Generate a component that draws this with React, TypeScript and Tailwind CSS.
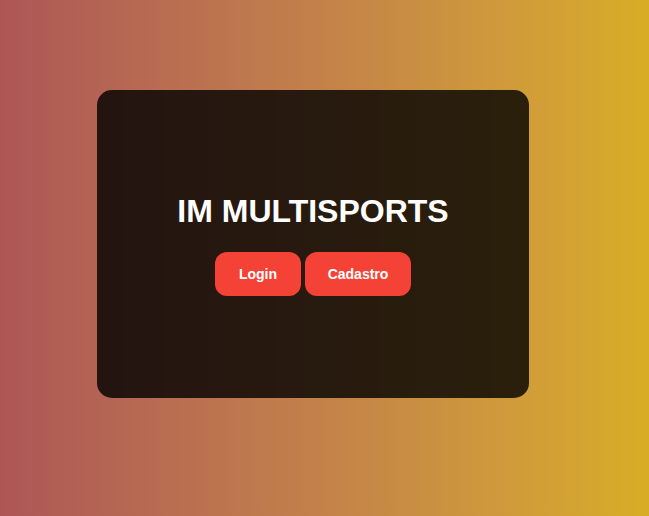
export default function App() {
  return (
    <div
      className="min-h-screen w-full bg-gradient-to-r from-[#ad5656] to-[#d8ad25] pl-[97px] pt-[90px]"
      style={{ fontFamily: '"Liberation Sans", Arial, sans-serif' }}
    >
      <div className="flex h-[308px] w-[432px] flex-col items-center justify-center rounded-[15px] bg-black/80">
        <h1 className="mb-[22px] text-[32px] font-bold leading-[37px] text-white">IM MULTISPORTS</h1>
        <div className="flex gap-1">
          <button className="h-11 w-[86px] rounded-xl bg-[#f44336] text-sm font-bold text-white">Login</button>
          <button className="h-11 w-[106px] rounded-xl bg-[#f44336] text-sm font-bold text-white">Cadastro</button>
        </div>
      </div>
    </div>
  );
}
